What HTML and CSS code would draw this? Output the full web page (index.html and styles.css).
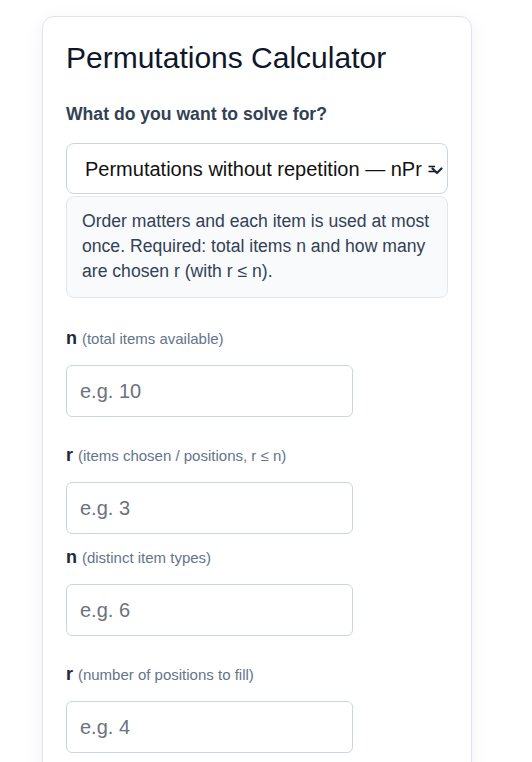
FILE: index.html
```html
<!DOCTYPE html>
<html lang="en">
<head>
    <meta charset="UTF-8">
    <meta name="viewport" content="width=device-width, initial-scale=1.0">
    <title>Permutations Calculator</title>
    <link rel="stylesheet" href="styles.css">
</head>
<body>
    <div class="card">
        <h1>Permutations Calculator</h1>

        <label class="mode-label" for="mode">What do you want to solve for?</label>
        <div class="select-wrap">
            <select id="mode" class="mode-select">
                <option>Permutations without repetition — nPr = n!/(n−r)!</option>
                <option>Permutations with repetition — n^r</option>
            </select>
            <svg class="chevron" width="12" height="8" viewBox="0 0 12 8" aria-hidden="true">
                <path d="M1.5 1.5 L6 6 L10.5 1.5" fill="none" stroke="#1e293b" stroke-width="2.2" stroke-linecap="round" stroke-linejoin="round"/>
            </svg>
        </div>
        <div class="mode-info">
            Order matters and each item is used at most once. Required: total items n and how many are chosen r (with r ≤ n).
        </div>

        <div class="group">
            <div class="field">
                <label for="nTotal"><b>n</b> <span class="hint">(total items available)</span></label>
                <input type="number" id="nTotal" placeholder="e.g. 10">
            </div>
            <div class="field">
                <label for="rChosen"><b>r</b> <span class="hint">(items chosen / positions, r ≤ n)</span></label>
                <input type="number" id="rChosen" placeholder="e.g. 3">
            </div>
        </div>

        <div class="group">
            <div class="field">
                <label for="nTypes"><b>n</b> <span class="hint">(distinct item types)</span></label>
                <input type="number" id="nTypes" placeholder="e.g. 6">
            </div>
            <div class="field">
                <label for="rPositions"><b>r</b> <span class="hint">(number of positions to fill)</span></label>
                <input type="number" id="rPositions" placeholder="e.g. 4">
            </div>
        </div>
    </div>
</body>
</html>
```

FILE: styles.css
```css
* {
    margin: 0;
    padding: 0;
    box-sizing: border-box;
    font-family: 'Liberation Sans', Arial, sans-serif;
}

body {
    background-color: #fff;
    color: #1e293b;
    padding: 16px 60px 0 42px;
}

.card {
    width: 430px;
    background: #fff;
    border: 1px solid #dde4ee;
    border-radius: 12px;
    box-shadow: 0 4px 20px rgba(15, 23, 42, 0.06);
    padding: 23px 23px 40px;
}

h1 {
    font-size: 30px;
    font-weight: 400;
    line-height: 36px;
    color: #0f172a;
    margin-bottom: 26px;
}

.mode-label {
    display: block;
    font-size: 17.6px;
    font-weight: 700;
    line-height: 24px;
    color: #334155;
    margin-bottom: 17px;
}

.select-wrap {
    position: relative;
}

.mode-select {
    display: block;
    width: 100%;
    height: 51px;
    padding: 0 12px 0 18px;
    font-size: 20px;
    color: #111;
    background: #fff;
    border: 1px solid #cbd5e1;
    border-radius: 8px;
    appearance: none;
    -webkit-appearance: none;
}

.chevron {
    position: absolute;
    right: 5px;
    top: 24px;
    pointer-events: none;
}

.mode-info {
    margin-top: 2px;
    padding: 12px 15px 13px;
    font-size: 17.6px;
    line-height: 25px;
    color: #334155;
    background: #f8fafc;
    border: 1px solid #e2e8f0;
    border-radius: 8px;
    margin-bottom: 28px;
}

.field {
    margin-bottom: 11px;
}

.field + .field {
    margin-top: 26px;
}

.field label {
    display: block;
    font-size: 17.6px;
    line-height: 24px;
    color: #1e293b;
    margin-bottom: 14px;
}

.field b {
    font-size: 18px;
}

.hint {
    font-size: 15px;
    color: #64748b;
}

.field input {
    display: block;
    width: 287px;
    height: 52px;
    padding: 0 13px;
    font-size: 20px;
    color: #111;
    border: 1px solid #cbd5e1;
    border-radius: 6px;
    background: #fff;
}

.field input::placeholder {
    color: #6b7280;
}
```
